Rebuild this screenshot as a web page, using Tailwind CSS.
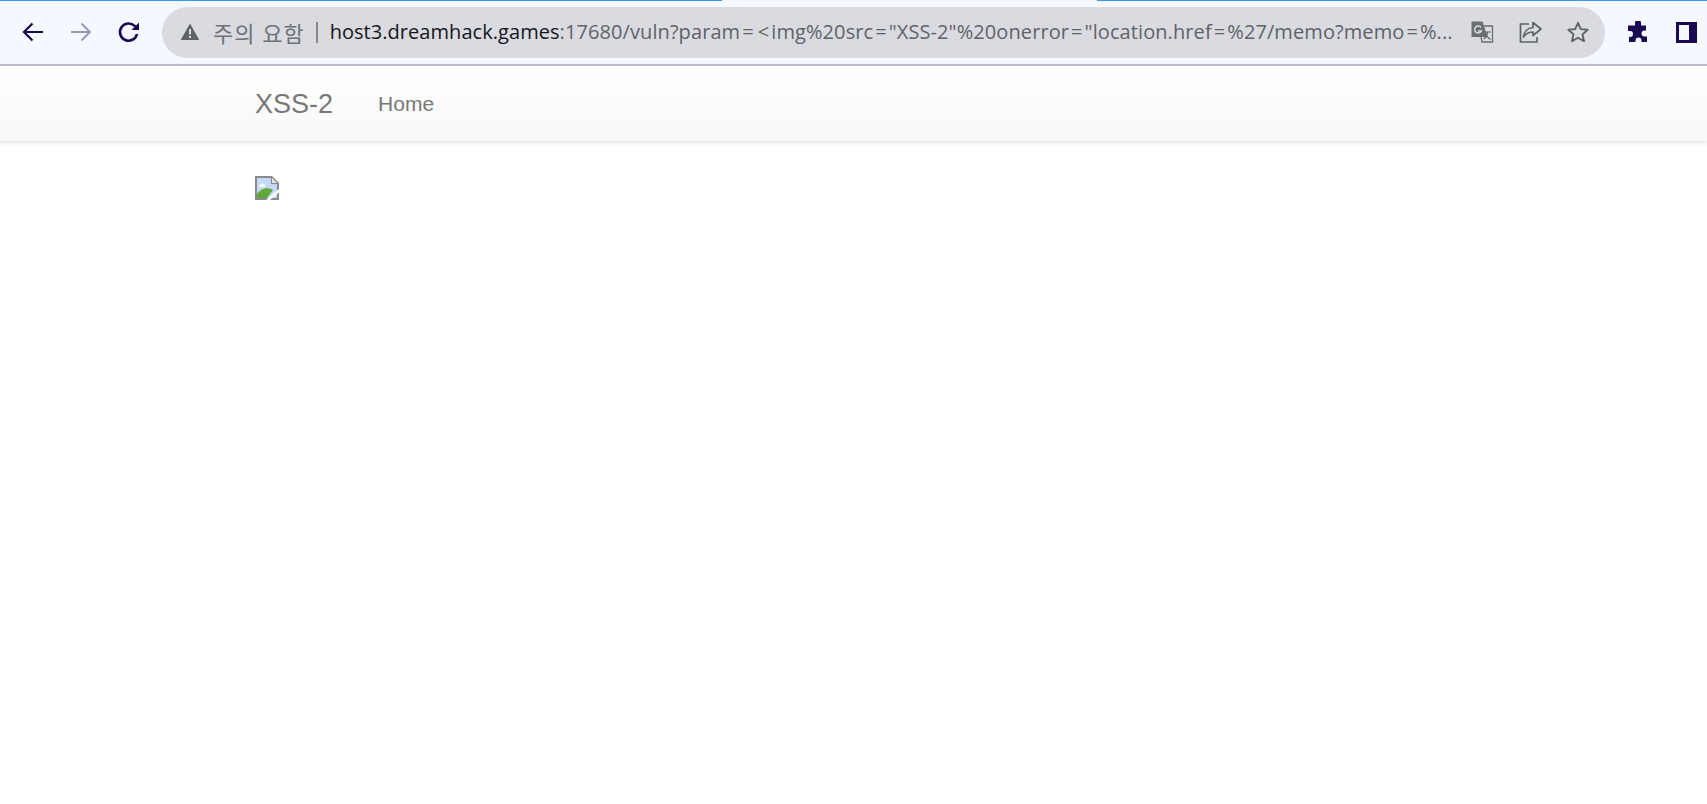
<!DOCTYPE html>
<html lang="ko">
<head>
<meta charset="utf-8">
<title>XSS-2</title>
<script src="https://cdn.jsdelivr.net/npm/@tailwindcss/browser@4"></script>
</head>
<body class="bg-white h-[804px] overflow-hidden font-['Liberation_Sans',sans-serif]">
<header class="h-[66px] bg-[#f5f8ff] border-b-2 border-[#bdbdcf] flex flex-col">
  <div class="h-px flex shrink-0">
    <div class="w-[722px] bg-[#3f94ee]"></div>
    <div class="w-[375px]"></div>
    <div class="flex-1 bg-[#3f94ee]"></div>
  </div>
  <div class="flex-1 flex items-center pb-[1px]">
    <div class="w-[162px] flex items-center pl-[21px] gap-[24px] shrink-0">
      <svg class="w-[24px] h-[24px]" viewBox="0 0 24 24" fill="none" stroke="#1a0a52" stroke-width="2.2"><path d="M22 12H3M11.5 3.5 3 12l8.500 8.500"/></svg>
      <svg class="w-[24px] h-[24px]" viewBox="0 0 24 24" fill="none" stroke="#9c97bd" stroke-width="2"><path d="M2 12h19M12.500 3.500 21 12l-8.500 8.500"/></svg>
      <svg class="w-[24px] h-[24px]" viewBox="0 0 24 24" fill="none" stroke="#1a0a52" stroke-width="2.600"><path d="M20 14a8.600 8.600 0 1 1-2.400-8.100L21 9"/><path d="M22 2.500V10h-7.500z" fill="#1a0a52" stroke="none"/></svg>
    </div>
    <div class="w-[1443px] h-[51px] rounded-full bg-[#dadbe0] flex items-center shrink-0 pl-[18px] pr-[15px] font-['Open_Sans',sans-serif] text-[#5f6368] text-[20px]">
      <svg class="w-[20px] h-[20px] shrink-0" viewBox="0 0 20 20"><path d="M10 1.500 19.300 18H.7z" fill="#5f6368"/><path d="M9 7h2v5.500H9zM9 14h2v2H9z" fill="#dadbe0"/></svg>
      <span class="ml-[13px] font-['Noto_Sans_CJK_KR',sans-serif] text-[22px] text-[#6f7277] tracking-[0.9px] whitespace-nowrap">주의 요함</span>
      <span class="ml-[11px] mr-[12px] w-[2px] h-[21px] bg-[#85878b] shrink-0"></span>
      <span class="flex-1 min-w-0 whitespace-nowrap overflow-hidden"><span class="text-[#15151b] tracking-[0.05px]">host3.dreamhack.games</span><span class="tracking-[0.09px]">:17680/vuln?param<span class="px-[2px]">=</span><span class="px-[2px]">&lt;</span>img%20src<span class="px-[2px]">=</span>"XSS-2"%20onerror<span class="px-[2px]">=</span>"location.href<span class="px-[2px]">=</span>%27/memo?memo<span class="px-[2px]">=</span>%...</span></span>
      <div class="flex items-center gap-[24px] shrink-0 ml-[14px]">
        <svg class="w-[24px] h-[24px]" viewBox="0 0 24 24" fill="none"><path d="M9 6h13.500v16H12z" stroke="#6b6e73" stroke-width="1.300"/><path d="M1.500 1.500h11l5 15.500H1.500z" fill="#6b6e73"/><path d="M11 7.500A3.500 3.500 0 1 0 11.300 11H8" stroke="#dadbe0" stroke-width="1.500"/><path d="M14 12h7M17.500 12c0 3-2 6-4 7M15 13.500c1 2.500 3 4.500 5.500 6" stroke="#5f6368" stroke-width="1.200"/></svg>
        <svg class="w-[24px] h-[24px]" viewBox="0 0 24 24" fill="none" stroke="#5f6368" stroke-width="1.700"><path d="M11 4H2.500v18H19v-5"/><path d="M15 2.500 23 9l-8 6.500V12c-4 0-7 1.500-9.500 5 .5-5 4-9 9.500-9.500z" stroke-linejoin="round"/></svg>
        <svg class="w-[24px] h-[24px]" viewBox="0 0 24 24" fill="none" stroke="#5f6368" stroke-width="1.900"><path d="m12 2.800 2.800 6.300 6.900.7-5.200 4.600 1.500 6.800-6-3.500-6 3.500 1.500-6.800-5.200-4.600 6.900-.7z" stroke-linejoin="round"/></svg>
      </div>
    </div>
    <div class="flex-1 flex items-center pl-[22px] gap-[27px]">
      <svg class="w-[22px] h-[22px]" viewBox="0 0 22 22" fill="#1a0a52"><path d="M8 1.500a3 3 0 0 1 6 0V4h5v5h-1.500a3 3 0 0 0 0 6H20v5.500h-5.500V19a3 3 0 0 0-6 0v1.500H2V15.500h1a3 3 0 0 0 0-6H1V4h7z" transform="translate(0 .5)"/></svg>
      <svg class="w-[21px] h-[21px]" viewBox="0 0 21 21"><path fill-rule="evenodd" d="M0 0h21v21H0zM3 3v15h10V3z" fill="#1a0a52"/></svg>
    </div>
  </div>
</header>
<nav class="h-[76px] bg-gradient-to-b from-white to-[#f8f8f8] shadow-[0_1px_5px_rgba(0,0,0,0.12)] border-b border-[#ececec] flex items-center pl-[255px]">
  <a class="text-[#777777] text-[27px] leading-none mt-[2px]">XSS-2</a>
  <a class="ml-[45px] text-[#777777] text-[21px] leading-none">Home</a>
</nav>
<main class="pl-[255px] pt-[34px]">
  <svg class="w-[24px] h-[24px]" viewBox="0 0 24 24">
    <path d="M0 0h17l7 7v17H0z" fill="#8a8a8a"/>
    <path d="M2 2h14v6h6v14H2z" fill="#c4d9f7"/>
    <path d="M17 2v5h5z" fill="#e8e8e8"/>
    <path d="M5 9c1-2 4-2 5 0 1 1 0 2-1 2H5C4 11 4 9 5 9z" fill="#ffffff"/>
    <path d="M2 22v-4c4-6 11-7 16-4l-6 8z" fill="#60a83a"/>
    <path d="M11 24 24 13v3.500L15 24z" fill="#ffffff"/>
  </svg>
</main>
</body>
</html>
